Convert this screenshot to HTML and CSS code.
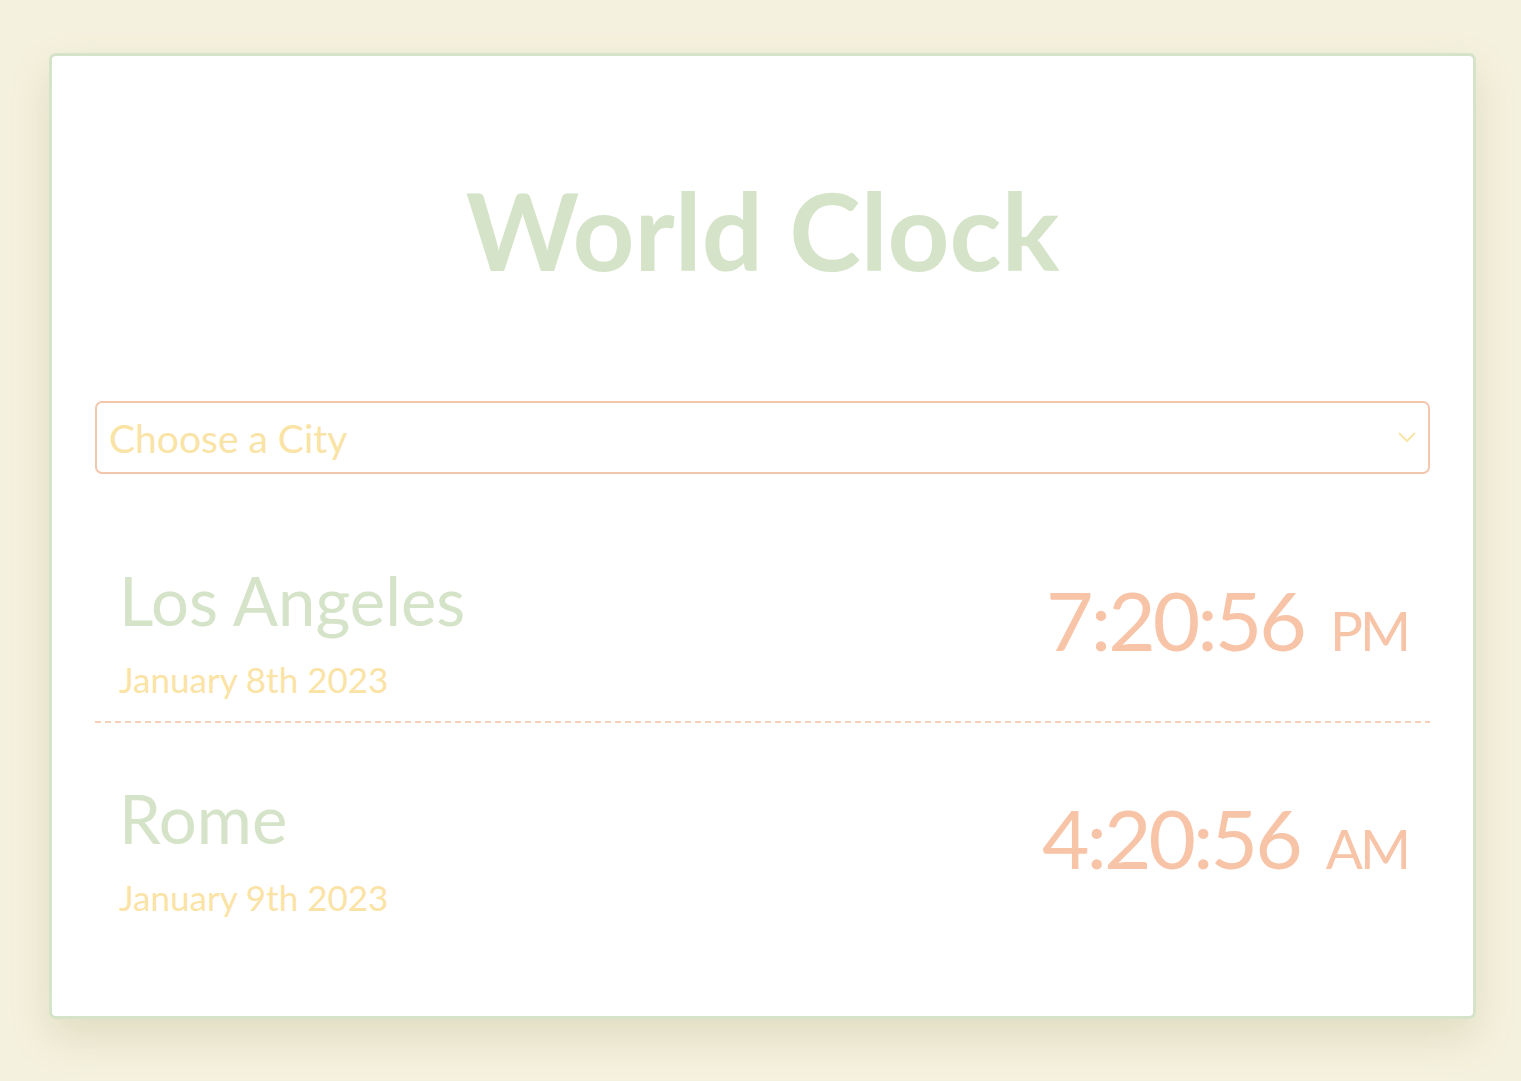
FILE: index.html
```html
<!DOCTYPE html>
<html>
<head>
<meta charset="utf-8">
<link rel="stylesheet" href="styles.css">
<title>World Clock</title>
</head>
<body>
<div class="card">
  <h1 class="title">World Clock</h1>
  <div class="select">
    <span class="select-text">Choose a City</span>
    <svg class="chevron" width="18" height="11" viewBox="0 0 18 11"><path d="M1 1 L9 9 L17 1" fill="none" stroke="#f7e6a8" stroke-width="2"/></svg>
  </div>
  <div class="cities">
    <div class="city">
      <div class="city-info">
        <div class="city-name">Los Angeles</div>
        <div class="city-date">January 8th 2023</div>
      </div>
      <div class="city-time">7:20:56 <span class="ampm">PM</span></div>
    </div>
    <div class="divider"></div>
    <div class="city city-second">
      <div class="city-info">
        <div class="city-name">Rome</div>
        <div class="city-date">January 9th 2023</div>
      </div>
      <div class="city-time">4:20:56 <span class="ampm">AM</span></div>
    </div>
  </div>
</div>
</body>
</html>
```
FILE: styles.css
```css
html, body {
  margin: 0;
  padding: 0;
  background: #f4f1de;
  font-family: Lato, "Open Sans", sans-serif;
}
body {
  padding: 53px 0 0 49px;
  height: 1081px;
  box-sizing: border-box;
  overflow: hidden;
}
.card {
  box-sizing: border-box;
  width: 1427px;
  height: 966px;
  background: #fff;
  border: 3px solid #d5e3c9;
  border-radius: 7px;
  box-shadow: 0 18px 40px rgba(150, 140, 80, 0.2);
  padding: 0 43px;
}
.title {
  margin: 0;
  padding-top: 113px;
  height: 345px;
  box-sizing: border-box;
  text-align: center;
  font-size: 108px;
  line-height: 120px;
  font-weight: 700;
  color: #d5e3c9;
}
.select {
  box-sizing: border-box;
  height: 73px;
  border: 2px solid #f3c6ae;
  border-radius: 7px;
  display: flex;
  align-items: center;
  justify-content: space-between;
  padding: 0 10px 0 12px;
}
.select-text {
  font-size: 39px;
  color: #f9e3a5;
}
.chevron {
  margin-right: 2px;
}
.cities {
  padding-top: 66px;
}
.city {
  display: flex;
  justify-content: space-between;
  align-items: center;
  padding: 20px 22px 20px 24px;
}
.divider {
  height: 2px;
  background-image: repeating-linear-gradient(to right, #f7d0ba 0px, #f7d0ba 6px, #ffffff 6px, #ffffff 10px);
}
.city-second {
  padding-top: 55px;
}
.city-name {
  font-size: 67px;
  line-height: 80px;
  color: #d5e3c9;
}
.city-date {
  margin-top: 17px;
  font-size: 35px;
  line-height: 44px;
  color: #fae3a5;
}
.city-time {
  font-size: 82px;
  line-height: 100px;
  letter-spacing: -3px;
  color: #f7c4a8;
  margin-bottom: 13px;
}
.ampm {
  font-size: 55px;
  letter-spacing: -3px;
  margin-left: 8px;
}
```
